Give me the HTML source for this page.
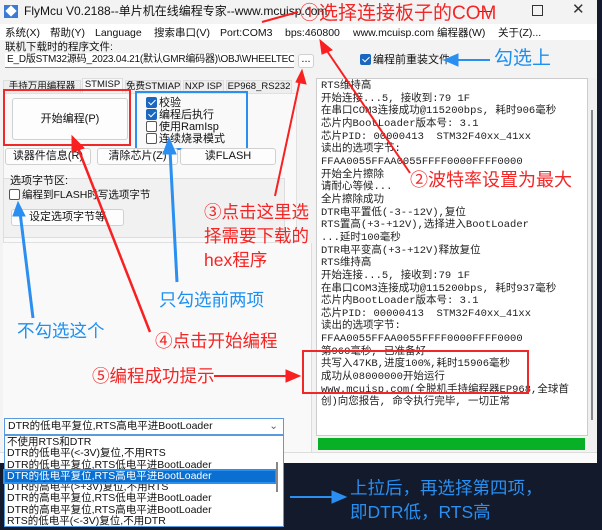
<!DOCTYPE html>
<html><head><meta charset="utf-8">
<style>
*{box-sizing:border-box;margin:0;padding:0}
body{width:602px;height:530px;overflow:hidden;position:relative;background:#121a2c;font-family:"Liberation Sans","Noto Sans CJK SC",sans-serif;font-size:11px;color:#111;line-height:1.2}
.a{position:absolute}
.win{left:0;top:0;width:597px;height:463px;background:#f3f3f3}
.btn{position:absolute;background:#fdfdfd;border:1px solid #d0d0d0;border-radius:3px;text-align:center;font-size:11px}
.cb{display:inline-block;width:11px;height:11px;border:1px solid #555;border-radius:2px;vertical-align:-2px;margin-right:2px;background:#fff}
.cb.on{background:#1a67c0;border-color:#1a67c0;position:relative}
.cb.on:after{content:"";position:absolute;left:3px;top:0px;width:3px;height:6px;border:solid #fff;border-width:0 1.5px 1.5px 0;transform:rotate(45deg)}
.log{left:316px;top:78px;width:272px;height:358px;background:#fff;border:1px solid #ccc;font-family:"Liberation Mono","Noto Sans CJK SC",monospace;font-size:10.5px;line-height:12.65px;padding:1px 0 0 4px;white-space:pre;overflow:hidden;color:#222}
.red{color:#f32525;font-family:"Liberation Sans","Noto Sans CJK SC",sans-serif}
.blue{color:#1e90f0}
.tab{position:absolute;top:80px;height:13px;font-size:9.5px;line-height:12px;text-align:center;border:1px solid #ddd;border-bottom:none;background:#eee;white-space:nowrap;overflow:hidden}
.m{position:absolute;top:27px;font-size:10.5px;line-height:12px;white-space:nowrap}
.dd div{height:11.3px;line-height:11.3px;font-size:10.5px;padding-left:2px;white-space:nowrap}
</style></head><body>
<div class="a win"></div>
<!-- title -->
<div class="a" style="left:4px;top:5px;width:14px;height:13px;background:#3a7bd5"></div>
<div class="a" style="left:7px;top:7px;width:8px;height:8px;background:#fff;transform:rotate(45deg)"></div>
<div class="a" style="left:24px;top:4px;font-size:12px">FlyMcu V0.2188--单片机在线编程专家--www.mcuisp.com</div>
<div class="a" style="left:478px;top:2px;font-size:14px;color:#333">—</div>
<div class="a" style="left:532px;top:5px;width:11px;height:11px;border:1px solid #333"></div>
<div class="a" style="left:572px;top:1px;font-size:15px;color:#333">✕</div>
<!-- menu -->
<div class="a" style="left:0;top:24px;width:597px;height:16px;background:#fff"></div>
<div class="m" style="left:5px">系统(X)</div>
<div class="m" style="left:50px">帮助(Y)</div>
<div class="m" style="left:95px">Language</div>
<div class="m" style="left:154px">搜索串口(V)</div>
<div class="m" style="left:220px">Port:COM3</div>
<div class="m" style="left:285px">bps:460800</div>
<div class="m" style="left:353px">www.mcuisp.com 编程器(W)</div>
<div class="m" style="left:498px">关于(Z)...</div>
<div class="a" style="left:5px;top:41px;font-size:10.5px;line-height:12px">联机下载时的程序文件:</div>
<div class="a" style="left:5px;top:53px;width:289px;height:15px;background:#fff;border-bottom:1px solid #888;font-size:10px;line-height:14px;padding-left:2px;white-space:nowrap;overflow:hidden;letter-spacing:-0.2px">E_D版STM32源码_2023.04.21(默认GMR编码器)\OBJ\WHEELTEC.hex</div>
<div class="btn" style="left:298px;top:54px;width:16px;height:14px;line-height:9px">...</div>
<div class="a" style="left:360px;top:54px;font-size:11px"><span class="cb on"></span>编程前重装文件</div>
<!-- tabs -->
<div class="tab" style="left:3px;width:78px">手持万用编程器</div>
<div class="tab" style="left:82px;width:41px;top:78px;height:15px;background:#f9f9f9">STMISP</div>
<div class="tab" style="left:125px;width:56px">免费STMIAP</div>
<div class="tab" style="left:183px;width:41px">NXP ISP</div>
<div class="tab" style="left:226px;width:66px">EP968_RS232</div>
<div class="a" style="left:3px;top:93px;width:294px;height:150px;background:#f9f9f9;border:1px solid #e0e0e0"></div>
<div class="btn" style="left:12px;top:98px;width:116px;height:42px;line-height:40px">开始编程(P)</div>
<div class="a" style="left:3px;top:89px;width:128px;height:57px;border:2px solid #f02828"></div>
<div class="a" style="left:146px;top:97px;line-height:12px;font-size:11px">
<div><span class="cb on"></span>校验</div><div><span class="cb on"></span>编程后执行</div><div><span class="cb"></span>使用RamIsp</div><div><span class="cb"></span>连续烧录模式</div></div>
<div class="a" style="left:135px;top:91px;width:113px;height:59px;border:2px solid #2a8ff0"></div>
<div class="btn" style="left:5px;top:148px;width:86px;height:17px;line-height:15px">读器件信息(R)</div>
<div class="btn" style="left:97px;top:148px;width:81px;height:17px;line-height:15px">清除芯片(Z)</div>
<div class="btn" style="left:180px;top:148px;width:96px;height:17px;line-height:15px">读FLASH</div>
<div class="a" style="left:3px;top:178px;width:282px;height:60px;border:1px solid #ddd;background:#f1f1f1"></div>
<div class="a" style="left:10px;top:175px;font-size:11px">选项字节区:</div>
<div class="a" style="left:9px;top:189px;font-size:10.5px"><span class="cb"></span>编程到FLASH时写选项字节</div>
<div class="btn" style="left:11px;top:209px;width:113px;height:17px;line-height:15px">设定选项字节等</div>
<div class="a" style="left:3px;top:243px;width:309px;height:209px;background:#f9f9f9;border-right:1px solid #ddd"></div>
<div class="a" style="left:0;top:452px;width:597px;height:11px;background:#fafafa;border-top:1px solid #ddd"></div>
<!-- log -->
<div class="a log">RTS维持高
开始连接...5, 接收到:79 1F
在串口COM3连接成功@115200bps, 耗时906毫秒
芯片内BootLoader版本号: 3.1
芯片PID: 00000413  STM32F40xx_41xx
读出的选项字节:
FFAA0055FFAA0055FFFF0000FFFF0000
开始全片擦除
请耐心等候...
全片擦除成功
DTR电平置低(-3--12V),复位
RTS置高(+3-+12V),选择进入BootLoader
...延时100毫秒
DTR电平变高(+3-+12V)释放复位
RTS维持高
开始连接...5, 接收到:79 1F
在串口COM3连接成功@115200bps, 耗时937毫秒
芯片内BootLoader版本号: 3.1
芯片PID: 00000413  STM32F40xx_41xx
读出的选项字节:
FFAA0055FFAA0055FFFF0000FFFF0000
第960毫秒, 已准备好
共写入47KB,进度100%,耗时15906毫秒
成功从08000000开始运行
www.mcuisp.com(全脱机手持编程器EP968,全球首
创)向您报告, 命令执行完毕, 一切正常</div>
<div class="a" style="left:588px;top:78px;width:9px;height:372px;background:#f0f0f0"></div>
<div class="a" style="left:591px;top:110px;width:2px;height:310px;background:#888"></div>
<div class="a" style="left:318px;top:438px;width:267px;height:12px;background:#07b025"></div>
<div class="a" style="left:302px;top:350px;width:227px;height:44px;border:2px solid #f02828"></div>
<!-- combo -->
<div class="a" style="left:4px;top:418px;width:280px;height:17px;background:#fff;border:1px solid #5a9be0;font-size:10.5px;line-height:15px;padding-left:3px">DTR的低电平复位,RTS高电平进BootLoader<span style="position:absolute;right:5px;color:#666">⌄</span></div>
<div class="a dd" style="left:4px;top:435px;width:280px;height:92px;background:#fff;border:1px solid #5a9be0;padding-top:1px">
<div>不使用RTS和DTR</div><div>DTR的低电平(&lt;-3V)复位,不用RTS</div><div>DTR的低电平复位,RTS低电平进BootLoader</div>
<div style="background:#0a6fd0;color:#fff;outline:2px solid #2a90f0;width:270px">DTR的低电平复位,RTS高电平进BootLoader</div>
<div>DTR的高电平(&gt;+3V)复位,不用RTS</div><div>DTR的高电平复位,RTS低电平进BootLoader</div><div>DTR的高电平复位,RTS高电平进BootLoader</div><div>RTS的低电平(&lt;-3V)复位,不用DTR</div>
</div>
<div class="a" style="left:276px;top:462px;width:2px;height:30px;background:#888"></div>
<!-- annotations -->
<div class="a red" style="left:300px;top:3px;font-size:19px">①选择连接板子的COM</div>
<div class="a blue" style="left:494px;top:48px;font-size:19px">勾选上</div>
<div class="a red" style="left:410px;top:170px;font-size:18px">②波特率设置为最大</div>
<div class="a red" style="left:204px;top:200px;font-size:17.5px;line-height:24px">③点击这里选<br>择需要下载的<br>hex程序</div>
<div class="a blue" style="left:159px;top:290px;font-size:17.5px">只勾选前两项</div>
<div class="a blue" style="left:17px;top:321px;font-size:17.5px">不勾选这个</div>
<div class="a red" style="left:155px;top:331px;font-size:17.5px">④点击开始编程</div>
<div class="a red" style="left:92px;top:366px;font-size:17.5px">⑤编程成功提示</div>
<div class="a" style="left:350px;top:476px;font-size:17.5px;color:#2a8ff0;line-height:24px">上拉后，再选择第四项，<br>即DTR低，RTS高</div>
<svg class="a" style="left:0;top:0" width="602" height="530">
<g fill="#f82020" stroke="#f82020">
<line x1="298" y1="12" x2="262" y2="22" stroke-width="2"/>
<line x1="410" y1="173" x2="325" y2="48" stroke-width="2"/>
<polygon points="320,40 332,50 322,54"/>
<line x1="275" y1="196" x2="300" y2="80" stroke-width="2"/>
<polygon points="302,70 306,84 296,82"/>
<line x1="150" y1="332" x2="78" y2="148" stroke-width="2.5"/>
<polygon points="72,136 84,148 72,152"/>
<line x1="214" y1="376" x2="290" y2="376" stroke-width="2"/>
<polygon points="300,376 286,370 286,382"/>
</g>
<g fill="#2a8ff0" stroke="#2a8ff0">
<line x1="490" y1="60" x2="455" y2="60" stroke-width="2"/>
<polygon points="444,60 458,54 458,66"/>
<line x1="177" y1="282" x2="170" y2="150" stroke-width="3"/>
<polygon points="169,138 176,154 163,154"/>
<line x1="33" y1="318" x2="20" y2="212" stroke-width="3"/>
<polygon points="18,202 25,216 13,216"/>
<line x1="290" y1="497" x2="335" y2="497" stroke-width="2"/>
<polygon points="346,497 332,491 332,503"/>
</g>
</svg>
</body></html>
